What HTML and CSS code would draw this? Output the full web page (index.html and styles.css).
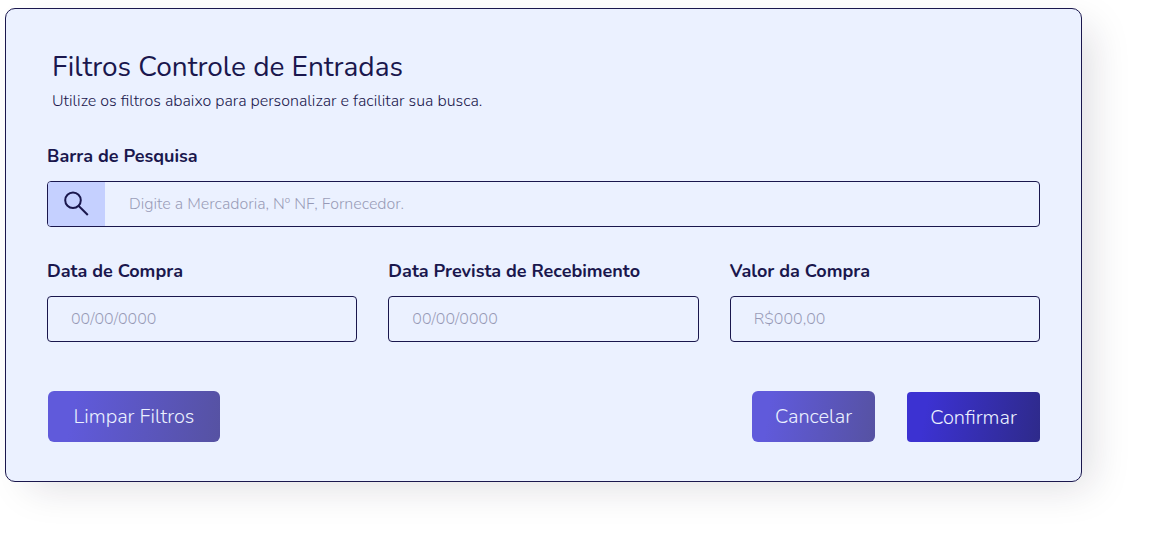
FILE: index.html
```html
<!DOCTYPE html>
<html lang="pt-BR">
<head>
<meta charset="utf-8">
<meta name="viewport" content="width=device-width, initial-scale=1">
<title>Filtros Controle de Entradas</title>
<link rel="stylesheet" href="styles.css">
</head>
<body>
<main class="page">
  <form class="card">
    <header class="card-header">
      <h1 class="title">Filtros Controle de Entradas</h1>
      <p class="subtitle">Utilize os filtros abaixo para personalizar e facilitar sua busca.</p>
    </header>
    <div class="field">
      <label class="label" for="pesquisa">Barra de Pesquisa</label>
      <div class="search">
        <span class="search-icon">
          <svg width="26" height="26" viewBox="0 0 26 26" fill="none" stroke="currentColor" stroke-width="2" aria-hidden="true">
            <circle cx="9" cy="9.2" r="7.8"/>
            <path d="M14.5 14.7L23.8 24"/>
          </svg>
        </span>
        <input class="search-input" id="pesquisa" type="text" placeholder="Digite a Mercadoria, Nº NF, Fornecedor.">
      </div>
    </div>
    <div class="columns">
      <div class="field">
        <label class="label" for="compra">Data de Compra</label>
        <input class="input" id="compra" type="text" placeholder="00/00/0000">
      </div>
      <div class="field">
        <label class="label" for="recebimento">Data Prevista de Recebimento</label>
        <input class="input" id="recebimento" type="text" placeholder="00/00/0000">
      </div>
      <div class="field">
        <label class="label" for="valor">Valor da Compra</label>
        <input class="input" id="valor" type="text" placeholder="R$000,00">
      </div>
    </div>
    <div class="actions">
      <button class="button button-clear" type="reset">Limpar Filtros</button>
      <div class="actions-end">
        <button class="button button-cancel" type="button">Cancelar</button>
        <button class="button button-confirm" type="submit">Confirmar</button>
      </div>
    </div>
  </form>
</main>
</body>
</html>
```
FILE: styles.css
```css
* {
  box-sizing: border-box;
}

body {
  margin: 0;
  background: #fff;
  color: #1a174d;
  font-family: Nunito, "Open Sans", "Noto Sans", sans-serif;
}

.page {
  padding: 8px 77px 53px 5px;
}

.card {
  padding: 38px 41px 39px;
  border: 1px solid #1a174d;
  border-radius: 10px;
  background: #ebf1ff;
  box-shadow: 16px 12px 40px -8px rgba(26, 23, 50, 0.15);
}

.card-header {
  padding: 0 5px;
  margin-bottom: 30px;
}

.title {
  margin: 0 0 2px;
  font-size: 28px;
  font-weight: 400;
  line-height: 40px;
}

.subtitle {
  margin: 0;
  font-size: 16px;
  font-weight: 300;
  line-height: 24px;
}

.field {
  display: flex;
  flex-direction: column;
  gap: 12px;
  min-width: 0;
}

.label {
  font-size: 18px;
  font-weight: 700;
  line-height: 26px;
}

.search {
  display: flex;
  height: 46px;
  overflow: hidden;
  border: 1px solid #1a174d;
  border-radius: 4px;
}

.search-icon {
  display: flex;
  flex: 0 0 57px;
  align-items: center;
  justify-content: center;
  background: #c5d0ff;
}

.search-input,
.input {
  min-width: 0;
  padding: 0 23px;
  border: 0;
  background: transparent;
  color: inherit;
  font: inherit;
  font-size: 16px;
  font-weight: 300;
}

.search-input {
  flex: 1;
  padding: 0 24px;
}

.input {
  height: 46px;
  border: 1px solid #1a174d;
  border-radius: 4px;
}

.search-input::placeholder,
.input::placeholder {
  color: #1a174d;
  opacity: 0.4;
}

.columns {
  display: grid;
  grid-template-columns: repeat(3, minmax(0, 1fr));
  gap: 31px;
  margin-top: 31px;
}

.actions,
.actions-end {
  display: flex;
  align-items: flex-end;
  justify-content: space-between;
}

.actions {
  margin-top: 49px;
  padding-left: 1px;
}

.actions-end {
  gap: 32px;
}

.button {
  height: 51px;
  padding: 0;
  border: 0;
  border-radius: 6px;
  background: linear-gradient(100deg, #605adb 15%, #5652a2 100%);
  color: #ebf1ff;
  font: inherit;
  font-size: 20px;
  font-weight: 300;
}

.button-clear {
  width: 172px;
}

.button-cancel {
  width: 123px;
}

.button-confirm {
  width: 133px;
  height: 50px;
  border-radius: 4px;
  background: linear-gradient(100deg, #3c32d2 15%, #2e2a8a 100%);
}
```
